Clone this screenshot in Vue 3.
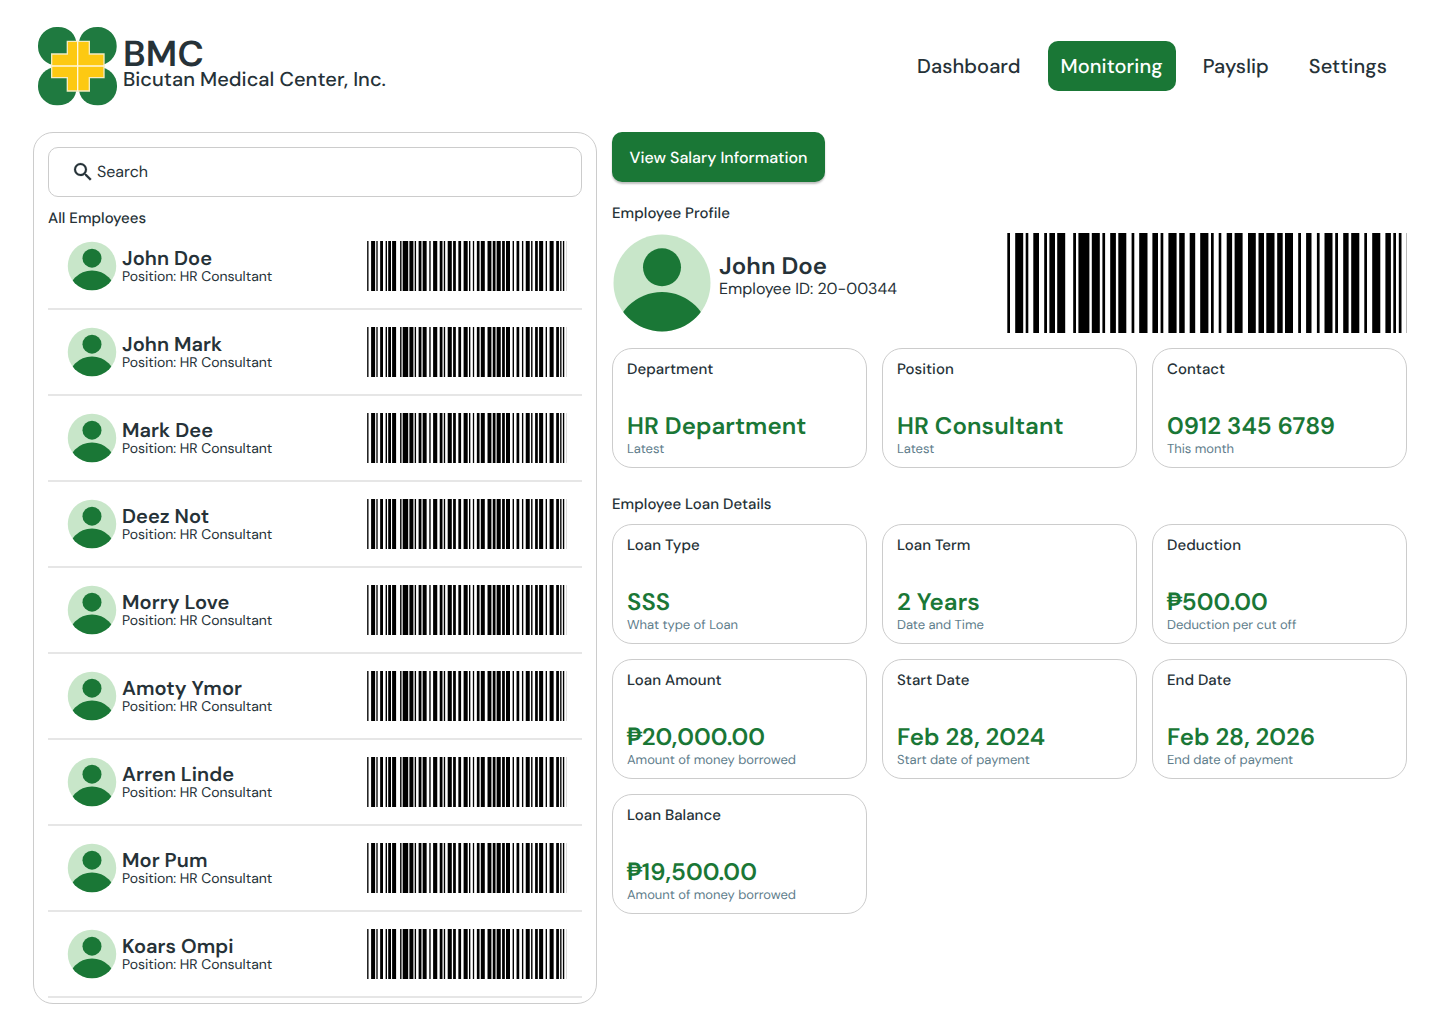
<script setup>
const nav = [
  { label: 'Dashboard' },
  { label: 'Monitoring', active: true },
  { label: 'Payslip' },
  { label: 'Settings' },
]

const employees = [
  'John Doe',
  'John Mark',
  'Mark Dee',
  'Deez Not',
  'Morry Love',
  'Amoty Ymor',
  'Arren Linde',
  'Mor Pum',
  'Koars Ompi',
]

const profileCards = [
  { title: 'Department', value: 'HR Department', note: 'Latest' },
  { title: 'Position', value: 'HR Consultant', note: 'Latest' },
  { title: 'Contact', value: '0912 345 6789', note: 'This month' },
]

const loanCards = [
  { title: 'Loan Type', value: 'SSS', note: 'What type of Loan' },
  { title: 'Loan Term', value: '2 Years', note: 'Date and Time' },
  { title: 'Deduction', currency: '₱', value: '500.00', note: 'Deduction per cut off' },
  { title: 'Loan Amount', currency: '₱', value: '20,000.00', note: 'Amount of money borrowed' },
  { title: 'Start Date', value: 'Feb 28, 2024', note: 'Start date of payment' },
  { title: 'End Date', value: 'Feb 28, 2026', note: 'End date of payment' },
  { title: 'Loan Balance', currency: '₱', value: '19,500.00', note: 'Amount of money borrowed' },
]

const sections = [
  { heading: null, cards: profileCards },
  { heading: 'Employee Loan Details', cards: loanCards },
]

// [start, width] of every bar on a 400-unit wide code
const bars = [
  [0.3, 2.7], [8.2, 8], [18.7, 2.6], [26.3, 5.7], [37.2, 2.8], [42.4, 5.6], [50.2, 8],
  [66.2, 2.8], [71.4, 11], [84.8, 8], [95.4, 2.7], [103.2, 5.7], [111.3, 8], [124.6, 2.7],
  [132.2, 8.3], [145.4, 5.6], [153.6, 2.7], [161.4, 8.2], [172.2, 5.5], [182.7, 5.5],
  [193.2, 8.2], [204, 2.7], [211.7, 2.6], [219.7, 5.4], [227.6, 8], [241, 7.8], [251.5, 5.5],
  [259.3, 8.2], [270.2, 5.5], [278, 8], [291.2, 2.8], [299.1, 5.4], [309.9, 2.7],
  [317.5, 8], [328.2, 2.8], [336.2, 5.4], [344.2, 8.1], [357.3, 2.7], [365.2, 8.1],
  [378.4, 5.5], [386.3, 2.7], [391.8, 2.7],
]
</script>

<template>
  <div class="page">
    <svg class="defs" width="0" height="0" aria-hidden="true">
      <symbol id="avatar" viewBox="0 0 100 100">
        <clipPath id="face"><circle cx="50" cy="50" r="48.5" /></clipPath>
        <circle cx="50" cy="50" r="48.5" fill="#c8e6c9" />
        <circle cx="50" cy="34.3" r="19" fill="#1a7736" />
        <circle cx="50" cy="106.9" r="47.9" fill="#1a7736" clip-path="url(#face)" />
      </symbol>
      <symbol id="barcode" viewBox="0 0 400 100" preserveAspectRatio="none">
        <rect v-for="b in bars" :key="b[0]" :x="b[0]" y="0" :width="b[1]" height="100" />
        <rect x="399" y="0" width="1" height="100" fill="#bbb" />
      </symbol>
    </svg>

    <header class="top">
      <div class="brand">
        <svg class="logo" viewBox="21 19 243 243">
          <g fill="#1f7a40">
            <path d="M140 137V78C140 44 117 22 84 22H80A56 56 0 0 0 24 78V82A56 56 0 0 0 80 137Z" />
            <path d="M146 137V78C146 44 169 22 202 22H204A56 56 0 0 1 260 78V82A56 56 0 0 1 204 137Z" />
            <path d="M140 142V201C140 235 117 257 84 257H80A56 56 0 0 1 24 201V198A56 56 0 0 1 80 142Z" />
            <path d="M146 142V201C146 235 169 257 202 257H205A56 56 0 0 0 261 201V198A56 56 0 0 0 205 142Z" />
          </g>
          <path d="M112 65H178V103H222V174H178V214H112V174H65V103H112Z" fill="#fdc912" stroke="#f3ecc0" stroke-width="4" />
          <path d="M143 65V214M65 139H222" stroke="#fff8e0" stroke-width="4" />
        </svg>
        <div class="brand-text">
          <div class="brand-name">BMC</div>
          <div class="brand-sub">Bicutan Medical Center, Inc.</div>
        </div>
      </div>
      <nav class="nav">
        <a v-for="n in nav" :key="n.label" class="nav-item" :class="{ active: n.active }">{{ n.label }}</a>
      </nav>
    </header>

    <main class="main">
      <aside class="list">
        <div class="search">
          <svg viewBox="0 0 24 24" width="24" height="24" fill="#263238">
            <path stroke="#263238" stroke-width="0.2" d="M15.500 14h-.79l-.28-.27A6.471 6.471 0 0 0 16 9.500 6.500 6.500 0 1 0 9.500 16c1.610 0 3.090-.59 4.230-1.570l.27.28v.79l5 4.990L20.490 19l-4.990-5zm-6 0C7.010 14 5 11.990 5 9.500S7.010 5 9.500 5 14 7.010 14 9.500 11.990 14 9.500 14z" />
          </svg>
          <span class="search-text">Search</span>
        </div>
        <div class="label list-label">All Employees</div>
        <div v-for="e in employees" :key="e" class="row">
          <svg class="row-avatar"><use href="#avatar" /></svg>
          <div class="row-text">
            <div class="row-name">{{ e }}</div>
            <div class="row-role">Position: HR Consultant</div>
          </div>
          <svg class="row-code"><use href="#barcode" /></svg>
        </div>
      </aside>

      <section class="detail">
        <button class="primary">View Salary Information</button>
        <div class="label profile-label">Employee Profile</div>
        <div class="profile">
          <svg class="big-avatar"><use href="#avatar" /></svg>
          <div class="profile-text">
            <div class="profile-name">John Doe</div>
            <div class="profile-id">Employee ID: 20-00344</div>
          </div>
          <svg class="big-code"><use href="#barcode" /></svg>
        </div>
        <template v-for="(s, i) in sections" :key="i">
          <div v-if="s.heading" class="label loan-label">{{ s.heading }}</div>
          <div class="cards">
            <article v-for="c in s.cards" :key="c.title" class="card">
              <div class="card-title">{{ c.title }}</div>
              <div class="card-value"><span v-if="c.currency" class="currency">{{ c.currency }}</span>{{ c.value }}</div>
              <div class="card-note">{{ c.note }}</div>
            </article>
          </div>
        </template>
      </section>
    </main>
  </div>
</template>

<style>
body { background: #fff; }
</style>

<style scoped>
.page {
  box-sizing: border-box;
  width: 1440px;
  height: 1024px;
  overflow: hidden;
  padding: 26px 33px 0;
  font-family: "DM Sans", Inter, "Liberation Sans", sans-serif;
  font-optical-sizing: none;
  text-rendering: geometricPrecision;
  color: #263238;
  white-space: nowrap;
}
.page * { box-sizing: border-box; }
.defs { position: absolute; }
svg { display: block; flex: none; }

.top { display: flex; justify-content: space-between; height: 106px; }
.brand { display: flex; padding-left: 4px; }
.logo { width: 81px; height: 81px; }
.brand-text { padding: 11px 0 0 5px; }
.brand-name { font-size: 36px; font-weight: 600; line-height: 36px; letter-spacing: 0.2px; }
.brand-sub { font-size: 20px; font-weight: 500; line-height: 14px; letter-spacing: 0.04px; }
.nav { display: flex; gap: 14px; padding: 15px 7px 0 0; }
.nav-item {
  display: flex;
  align-items: center;
  height: 50px;
  padding: 2px 13px 0;
  border-radius: 10px;
  font-size: 20px;
  font-weight: 500;
  letter-spacing: 0.07px;
}
.nav-item.active { background: #1a7736; color: #fff; }

.main { display: flex; gap: 15px; }
.list {
  width: 564px;
  height: 872px;
  padding: 14px;
  border: 1px solid #ccc;
  border-radius: 20px;
}
.search {
  display: flex;
  align-items: center;
  gap: 2px;
  height: 50px;
  padding-left: 22px;
  border: 1px solid #ccc;
  border-radius: 10px;
  font-size: 16px;
}
.search-text { padding-bottom: 2px; }
.label { font-size: 15px; font-weight: 500; line-height: 20px; letter-spacing: 0.04px; }
.list-label { margin: 11px 0 -4px; }
.row {
  display: flex;
  align-items: center;
  height: 86px;
  padding: 0 15px 0 19px;
  border-bottom: 2px solid #e6e6e6;
}
.row-avatar { width: 50px; height: 50px; }
.row-text { flex: 1; padding: 2px 0 0 5px; }
.row-name { font-size: 20px; font-weight: 600; line-height: 20px; letter-spacing: 0.06px; }
.row-role { font-size: 14px; line-height: 16px; letter-spacing: -0.03px; }
.row-code { width: 200px; height: 50px; }

.detail { width: 795px; }
.primary {
  display: flex;
  align-items: center;
  justify-content: center;
  width: 213px;
  height: 50px;
  padding: 1px 0 0;
  border: 0;
  border-radius: 10px;
  background: #1a7736;
  box-shadow: 0 2px 2px rgba(0, 0, 0, 0.25);
  color: #fff;
  font-family: inherit;
  font-size: 16px;
  font-weight: 500;
  font-optical-sizing: none;
  text-rendering: inherit;
}
.profile-label { margin: 21px 0 10px; }
.profile { display: flex; align-items: center; height: 100px; margin-bottom: 15px; }
.big-avatar { width: 100px; height: 100px; }
.profile-text { flex: 1; padding: 0 0 13px 7px; }
.profile-name { font-size: 24px; font-weight: 600; line-height: 25px; letter-spacing: 0.06px; }
.profile-id { font-size: 16px; line-height: 20px; }
.big-code { width: 400px; height: 100px; }
.loan-label { margin: 26px 0 10px; }
.cards { display: grid; grid-template-columns: repeat(3, 255px); gap: 15px; }
.card {
  height: 120px;
  padding: 10px 14px;
  border: 1px solid #ccc;
  border-radius: 20px;
}
.card-title { margin-bottom: 33px; font-size: 15px; font-weight: 500; line-height: 20px; letter-spacing: 0.04px; }
.card-value { color: #1a7736; font-size: 24px; font-weight: 600; line-height: 30px; letter-spacing: 0.06px; }
.currency { margin: 0 -1px 0 -1px; }
.card-note { color: #607d8b; font-size: 13px; line-height: 16px; letter-spacing: -0.02px; }
</style>
